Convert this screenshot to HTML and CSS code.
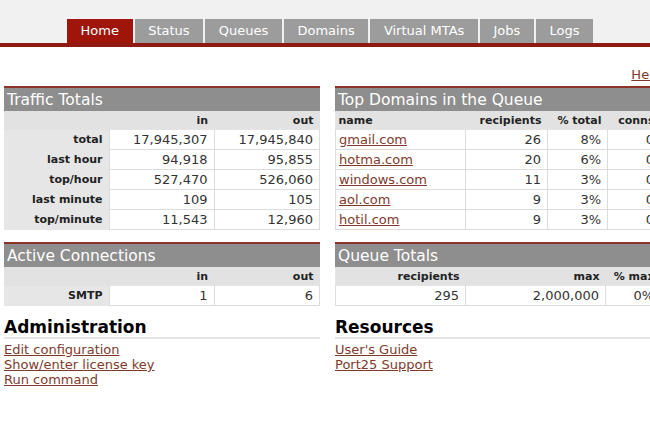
FILE: index.html
```html
<!DOCTYPE html>
<html>
<head>
<meta charset="utf-8">
<link rel="stylesheet" href="styles.css">
</head>
<body>
<div class="topbar">
  <nav class="tabs">
    <a class="tab active">Home</a>
    <a class="tab">Status</a>
    <a class="tab">Queues</a>
    <a class="tab">Domains</a>
    <a class="tab">Virtual MTAs</a>
    <a class="tab">Jobs</a>
    <a class="tab">Logs</a>
  </nav>
</div>
<div class="page">
  <div class="helprow"><a class="link" href="#">Help</a></div>
  <div class="grid">
    <div class="col">
      <section class="panel">
        <h2 class="panel-title">Traffic Totals</h2>
        <table class="data">
          <colgroup><col class="c105"><col class="c105"><col></colgroup>
          <tr class="head"><th></th><th>in</th><th>out</th></tr>
          <tr><th>total</th><td>17,945,307</td><td>17,945,840</td></tr>
          <tr><th>last hour</th><td>94,918</td><td>95,855</td></tr>
          <tr><th>top/hour</th><td>527,470</td><td>526,060</td></tr>
          <tr><th>last minute</th><td>109</td><td>105</td></tr>
          <tr><th>top/minute</th><td>11,543</td><td>12,960</td></tr>
        </table>
      </section>
      <section class="panel">
        <h2 class="panel-title">Active Connections</h2>
        <table class="data">
          <colgroup><col class="c105"><col class="c105"><col></colgroup>
          <tr class="head"><th></th><th>in</th><th>out</th></tr>
          <tr><th>SMTP</th><td>1</td><td>6</td></tr>
        </table>
      </section>
      <section class="block">
        <h3 class="block-title">Administration</h3>
        <a class="link" href="#">Edit configuration</a>
        <a class="link" href="#">Show/enter license key</a>
        <a class="link" href="#">Run command</a>
      </section>
    </div>
    <div class="col">
      <section class="panel">
        <h2 class="panel-title">Top Domains in the Queue</h2>
        <table class="data">
          <colgroup><col class="c130"><col class="c82"><col class="c60"><col></colgroup>
          <tr class="head"><th class="left">name</th><th>recipients</th><th>% total</th><th>conns</th></tr>
          <tr><td class="left"><a class="link" href="#">gmail.com</a></td><td>26</td><td>8%</td><td>0</td></tr>
          <tr><td class="left"><a class="link" href="#">hotma.com</a></td><td>20</td><td>6%</td><td>0</td></tr>
          <tr><td class="left"><a class="link" href="#">windows.com</a></td><td>11</td><td>3%</td><td>0</td></tr>
          <tr><td class="left"><a class="link" href="#">aol.com</a></td><td>9</td><td>3%</td><td>0</td></tr>
          <tr><td class="left"><a class="link" href="#">hotil.com</a></td><td>9</td><td>3%</td><td>0</td></tr>
        </table>
      </section>
      <section class="panel">
        <h2 class="panel-title">Queue Totals</h2>
        <table class="data">
          <colgroup><col class="c130"><col class="c140"><col></colgroup>
          <tr class="head"><th>recipients</th><th>max</th><th>% max</th></tr>
          <tr><td>295</td><td>2,000,000</td><td>0%</td></tr>
        </table>
      </section>
      <section class="block">
        <h3 class="block-title">Resources</h3>
        <a class="link" href="#">User's Guide</a>
        <a class="link" href="#">Port25 Support</a>
      </section>
    </div>
  </div>
</div>
</body>
</html>
```
FILE: styles.css
```css
html, body {
  margin: 0;
  padding: 0;
  background: #ffffff;
  overflow: hidden;
}
body {
  font-family: "DejaVu Sans", Verdana, sans-serif;
  color: #111;
  width: 650px;
  height: 433px;
}
.topbar {
  background: #f1f1f1;
  padding-top: 19px;
  border-bottom: 4px solid #8f1a12;
}
.tabs {
  display: flex;
  gap: 2px;
  padding-left: 67px;
}
.tab {
  display: block;
  height: 24px;
  line-height: 24px;
  padding: 0 13.6px;
  background: #9c9c9c;
  color: #ffffff;
  font-size: 13px;
  text-decoration: none;
}
.tab.active {
  background: #a01509;
}
.page {
  width: 657px;
  padding-left: 4px;
}
.helprow {
  text-align: right;
  height: 39px;
  padding-top: 20px;
  box-sizing: border-box;
  font-size: 13px;
}
.link {
  color: #7f3a2c;
  text-decoration: underline;
}
.grid {
  display: grid;
  grid-template-columns: 316px 326px;
  column-gap: 15px;
}
.col {
  display: flex;
  flex-direction: column;
}
.panel {
  border-top: 2px solid #8b3329;
  margin-bottom: 12px;
  background: #e6e6e6;
}
.panel-title {
  margin: 0;
  height: 23px;
  line-height: 24px;
  background: #8e8e8e;
  color: #ffffff;
  font-size: 15.5px;
  font-weight: normal;
  padding-left: 3px;
}
.data {
  width: 100%;
  border-collapse: collapse;
  table-layout: fixed;
  font-size: 13px;
}
.c105 { width: 105px; }
.c130 { width: 130px; }
.c82 { width: 82px; }
.c60 { width: 60px; }
.c140 { width: 140px; }
.data th, .data td {
  text-align: right;
  padding: 0 6px 0 3px;
  white-space: nowrap;
  overflow: hidden;
}
.data th {
  font-weight: bold;
  font-size: 11px;
  height: 20px;
  color: #222;
}
.data tr.head th {
  height: 18px;
  background: #e2e2e2;
}
.data td {
  background: #ffffff;
  border: 1px solid #dcdcdc;
  border-top: 1px solid #e4e4e4;
  height: 19px;
  color: #333;
}
.data .left {
  text-align: left;
}
.block {
  margin-top: -1px;
  display: flex;
  flex-direction: column;
  font-size: 13px;
  line-height: 15px;
}
.block-title {
  margin: 0 0 3px 0;
  font-size: 17px;
  font-weight: bold;
  color: #000;
  line-height: 20px;
  border-bottom: 2px solid #e4e4e4;
}
.block .link {
  align-self: flex-start;
}
```
